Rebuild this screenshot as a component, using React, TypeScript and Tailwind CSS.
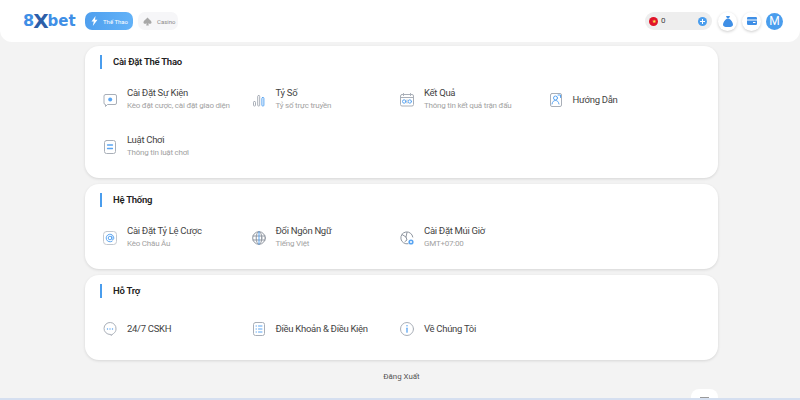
import type { ReactNode } from "react";

interface Item {
  icon: ReactNode;
  title: string;
  sub?: string;
}

const GR = "#a9afb8";
const BL = "#5aa5f2";

function Svg({ children }: { children: ReactNode }) {
  return (
    <svg width="16" height="16" viewBox="0 0 16 16" fill="none" strokeWidth="1" strokeLinecap="round" strokeLinejoin="round">
      {children}
    </svg>
  );
}

const icons = {
  event: (
    <Svg>
      <path d="M3.500 2.500h9.500a1.500 1.500 0 0 1 1.500 1.500v7a1.500 1.500 0 0 1-1.500 1.500H5.500L3.500 14.500v-2A1.500 1.500 0 0 1 2 11V4a1.500 1.500 0 0 1 1.500-1.500z" stroke={GR} />
      <circle cx="8.200" cy="7.500" r="2" fill={BL} />
    </Svg>
  ),
  score: (
    <Svg>
      <rect x="2.500" y="9.500" width="2" height="4.500" rx="0.800" stroke={GR} />
      <rect x="6.700" y="3.500" width="2" height="10.500" rx="0.800" stroke={GR} />
      <rect x="10.900" y="5.500" width="2" height="8.500" rx="0.800" stroke={BL} />
    </Svg>
  ),
  result: (
    <Svg>
      <rect x="1.500" y="2.500" width="13" height="11.500" rx="1.500" stroke={GR} />
      <path d="M1.500 5.500h13M4.500 1.500v2M11.500 1.500v2" stroke={GR} />
      <circle cx="5.200" cy="9.500" r="1.700" stroke={BL} />
      <circle cx="10.800" cy="9.500" r="1.700" stroke={BL} />
      <path d="M8 8v.5M8 10.500v.5" stroke={GR} />
    </Svg>
  ),
  guide: (
    <Svg>
      <rect x="2.500" y="1.500" width="11" height="13" rx="1.500" stroke={GR} />
      <circle cx="7.500" cy="6" r="2" stroke={BL} />
      <path d="M4 12c.4-2.500 1.800-3.500 3.500-3.500s3 1 3.500 3.500M10 3h2.500v2.500" stroke={BL} />
    </Svg>
  ),
  rules: (
    <Svg>
      <rect x="2.500" y="1.500" width="11" height="13" rx="2" stroke={GR} />
      <path d="M5.500 6h5M5.500 9.500h5" stroke={BL} strokeWidth="1.300" />
    </Svg>
  ),
  odds: (
    <Svg>
      <rect x="1.500" y="1.500" width="13" height="13" rx="3" stroke="#c3c8cf" />
      <circle cx="8" cy="8" r="1.800" stroke={BL} />
      <path d="M9.800 6.200v2.600c0 1.500 2 1.300 2-.8A3.800 3.800 0 1 0 10 11.300" stroke={BL} />
    </Svg>
  ),
  lang: (
    <Svg>
      <circle cx="8" cy="8" r="6.300" stroke="#8f96a0" />
      <ellipse cx="8" cy="8" rx="2.800" ry="6.300" stroke="#8f96a0" />
      <path d="M2 6h12M2 10h12" stroke="#8f96a0" />
      <path d="M8 1.700v12.600" stroke={BL} />
    </Svg>
  ),
  zone: (
    <Svg>
      <path d="M9 13.800A6 6 0 1 1 13.800 7" stroke="#8f96a0" />
      <path d="M3 4.500l4 2.500 1 3-2 1.500M8 2.500 7 7" stroke="#8f96a0" />
      <circle cx="12" cy="12" r="2.600" fill={BL} />
      <circle cx="12" cy="12" r="1" fill="#ffffff" />
    </Svg>
  ),
  chat: (
    <Svg>
      <path d="M8 13.500A6 6 0 1 1 14 8c0 2-1 3.500-2.500 4.500L9 14.500v-1z" stroke={GR} />
      <path d="M5.500 8h.01M8 8h.01M10.500 8h.01" stroke={BL} strokeWidth="1.400" />
    </Svg>
  ),
  terms: (
    <Svg>
      <rect x="2.500" y="1.500" width="11" height="13" rx="2" stroke={GR} />
      <path d="M5 5h.5M5 8h.5M5 11h.5M7.500 5H11M7.500 8H11M7.500 11H11" stroke={BL} />
    </Svg>
  ),
  info: (
    <Svg>
      <circle cx="8" cy="8" r="6.500" stroke={GR} />
      <path d="M8 7.200v4" stroke={BL} strokeWidth="1.300" />
      <path d="M8 4.700h.01" stroke={BL} strokeWidth="1.500" />
    </Svg>
  ),
};

const sport: Item[] = [
  { icon: icons.event, title: "Cài Đặt Sự Kiện", sub: "Kèo đặt cược, cài đặt giao diện" },
  { icon: icons.score, title: "Tỷ Số", sub: "Tỷ số trực truyền" },
  { icon: icons.result, title: "Kết Quả", sub: "Thông tin kết quả trận đấu" },
  { icon: icons.guide, title: "Hướng Dẫn" },
  { icon: icons.rules, title: "Luật Chơi", sub: "Thông tin luật chơi" },
];

const system: Item[] = [
  { icon: icons.odds, title: "Cài Đặt Tỷ Lệ Cược", sub: "Kèo Châu Âu" },
  { icon: icons.lang, title: "Đổi Ngôn Ngữ", sub: "Tiếng Việt" },
  { icon: icons.zone, title: "Cài Đặt Múi Giờ", sub: "GMT+07:00" },
];

const support: Item[] = [
  { icon: icons.chat, title: "24/7 CSKH" },
  { icon: icons.terms, title: "Điều Khoản & Điều Kiện" },
  { icon: icons.info, title: "Về Chúng Tôi" },
];

function Section({ title, items, className }: { title: string; items: Item[]; className: string }) {
  return (
    <section className={`bg-white rounded-[14px] shadow-[0_1px_3px_rgba(0,0,0,0.12)] pl-[15px] pt-[9px] ${className}`}>
      <div className="flex items-center gap-[11px] h-[14px]">
        <span className="w-[2px] h-[14px] bg-[#4a9ded]" />
        <h2 className="pt-[1px] text-[9.500px] font-semibold text-[#222] tracking-[-0.25px]">{title}</h2>
      </div>
      <div className="grid grid-cols-[repeat(4,148.500px)] auto-rows-[47px] mt-[7px]">
        {items.map((it) => (
          <div key={it.title} className="flex items-center">
            <span className="w-[27px] shrink-0 pl-[2px]">{it.icon}</span>
            <div className="-mt-[1px]">
              <div className="text-[9.500px] leading-[13px] text-[#444] tracking-[-0.3px]">{it.title}</div>
              {it.sub && <div className="text-[8px] leading-[13px] text-[#a2a2a2] tracking-[-0.22px]">{it.sub}</div>}
            </div>
          </div>
        ))}
      </div>
    </section>
  );
}

export default function App() {
  return (
    <div
      className="relative h-[400px] w-[800px] overflow-hidden bg-[#f3f3f3] border-b-2 border-[#d5dff0]"
      style={{ fontFamily: "Roboto, 'Liberation Sans', sans-serif" }}
    >
      {/* Top bar */}
      <header className="h-[42px] bg-white rounded-b-[12px] flex items-center pl-[23px] pr-[17px]">
        <div className="w-[62px] flex items-center font-black leading-none text-[#3f8fe6]" style={{ fontFamily: "'DejaVu Sans', sans-serif" }}>
          <span className="text-[16px]">8</span>
          <span className="text-[#2d5ea8] text-[20px] -mx-[1px]">X</span>
          <span className="text-[15px]">bet</span>
        </div>
        <button className="h-[18px] w-[48px] rounded-[7px] bg-gradient-to-r from-[#4f9fee] to-[#62b2f8] flex items-center gap-[5px] pl-[6px] text-[6px] text-white">
          <svg width="7" height="10" viewBox="0 0 7 10" fill="#ffffff"><path d="M4.500 0 .5 5.500h2.300L1.800 10 6.500 3.800H4z" /></svg>
          Thể Thao
        </button>
        <button className="ml-[5px] h-[18px] w-[40px] rounded-[7px] bg-[#f6f6f8] flex items-center gap-[5px] pl-[5px] text-[6px] text-[#8a8a8a]">
          <svg width="9" height="9" viewBox="0 0 10 10" fill="#a8a8a8"><path d="M5 .5C6.500 2.500 9.500 3.800 9.500 6 9.500 7.600 7.400 8.200 5.800 7l.7 2.500h-3L4.200 7C2.600 8.200.5 7.600.5 6 .5 3.800 3.500 2.500 5 .5z" /></svg>
          Casino
        </button>
        <div className="ml-auto h-[18px] w-[67px] rounded-full bg-[#eeeeee] flex items-center pl-[4px] pr-[5px]">
          <span className="w-[9px] h-[9px] rounded-full bg-[#e0142a] flex items-center justify-center text-[5px] leading-none text-[#ffe14d]">★</span>
          <span className="ml-[3px] text-[8px] text-[#444]">0</span>
          <span className="ml-auto w-[9px] h-[9px] rounded-full bg-[#4a9ded] flex items-center justify-center">
            <svg width="5" height="5" viewBox="0 0 5 5" stroke="#ffffff" strokeWidth="1"><path d="M2.500 0v5M0 2.500h5" /></svg>
          </span>
        </div>
        <span className="ml-[6px] w-[19px] h-[19px] rounded-full bg-white shadow-[0_1px_3px_rgba(0,0,0,0.2)] flex items-center justify-center">
          <svg width="10" height="11" viewBox="0 0 10 11" fill="#3f8fe6"><path d="M3 0h4L6 2.200H4zM3.800 2.800h2.400C8 4 10 6.500 10 8.500 10 10.500 8.500 11 5 11S0 10.500 0 8.500C0 6.500 2 4 3.800 2.800z" /></svg>
        </span>
        <span className="ml-[5px] w-[19px] h-[19px] rounded-full bg-white shadow-[0_1px_3px_rgba(0,0,0,0.2)] flex items-center justify-center">
          <svg width="10" height="8" viewBox="0 0 10 8"><rect width="10" height="8" rx="1.200" fill="#3f8fe6" /><path d="M0 3h10" stroke="#ffffff" /><path d="M6 5.500h2.500" stroke="#ffffff" /></svg>
        </span>
        <span className="ml-[5px] w-[17px] h-[17px] rounded-full bg-[#4a9ded] text-white text-[12px] flex items-center justify-center">M</span>
      </header>

      <main className="w-[633px] ml-[85px] mt-[4px] flex flex-col gap-[6px]">
        <Section title="Cài Đặt Thể Thao" items={sport} className="h-[132px]" />
        <Section title="Hệ Thống" items={system} className="h-[85px]" />
        <Section title="Hỗ Trợ" items={support} className="h-[85px]" />
        <div className="text-center text-[7.900px] text-[#555] mt-[1px] leading-[20px]">Đăng Xuất</div>
      </main>

      {/* floating back-to-top tab, cut off by the window */}
      <div className="absolute left-[691px] top-[389px] w-[27px] h-[20px] bg-white rounded-t-[8px] flex justify-center pt-[8px]">
        <span className="w-[9px] h-[2px] bg-[#9a9a9a]" />
      </div>
    </div>
  );
}
